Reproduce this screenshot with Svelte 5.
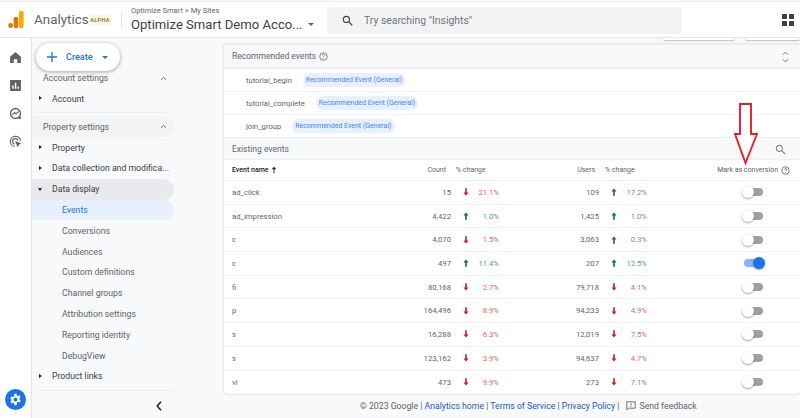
<script>
  const recommended = ['tutorial_begin', 'tutorial_complete', 'join_group'];
  const subs = ['Events', 'Conversions', 'Audiences', 'Custom definitions', 'Channel groups', 'Attribution settings', 'Reporting identity', 'DebugView'];
  const rows = [
    ['ad_click', '15', 'down', '21.1%', '109', 'up', '17.2%', false],
    ['ad_impression', '4,422', 'up', '1.0%', '1,425', 'up', '1.0%', false],
    ['c', '4,070', 'down', '1.5%', '3,063', 'up', '0.3%', false],
    ['c', '497', 'up', '11.4%', '207', 'up', '12.5%', true],
    ['fi', '80,168', 'down', '2.7%', '79,718', 'down', '4.1%', false],
    ['p', '164,496', 'down', '8.9%', '94,233', 'down', '4.9%', false],
    ['s', '16,288', 'down', '6.3%', '12,019', 'down', '7.5%', false],
    ['s', '123,162', 'down', '3.9%', '94,637', 'down', '4.7%', false],
    ['vi', '473', 'down', '9.9%', '273', 'down', '7.1%', false]
  ];
</script>

{#snippet help()}
  <svg class="help" viewBox="0 0 10 10" aria-hidden="true"><circle cx="5" cy="5" r="4.2" fill="none" stroke="#5f6368" stroke-width=".9"/><path d="M3.7 3.9c.1-.8.7-1.2 1.4-1.2s1.3.5 1.3 1.1c0 1-1.3 1-1.3 2" fill="none" stroke="#5f6368" stroke-width=".9"/><circle cx="5.1" cy="7.3" r=".55" fill="#5f6368"/></svg>
{/snippet}

{#snippet trend(dir)}
  <svg class="trend" viewBox="0 0 8 10" aria-hidden="true">
    {#if dir === 'up'}
      <path d="M4 .4 7.4 4.4H5.1V10H2.9V4.4H.6z" fill="#137333"/>
    {:else}
      <path d="M4 9.6 7.4 5.6H5.1V0H2.9V5.6H.6z" fill="#c5221f"/>
    {/if}
  </svg>
{/snippet}

{#snippet chevUp()}
  <svg class="chev" viewBox="0 0 10 6" aria-hidden="true"><path d="M1.2 5 5 1.4 8.8 5" fill="none" stroke="#5f6368" stroke-width="1.3"/></svg>
{/snippet}

<div class="page">
  <header class="top">
    <svg class="logo" viewBox="0 0 16 17" aria-hidden="true">
      <rect x="11" y="0" width="4.6" height="17" rx="1.6" fill="#f9ab00"/>
      <rect x="5.6" y="6" width="4.6" height="11" rx="1.6" fill="#e37400"/>
      <circle cx="2.6" cy="14.5" r="2.4" fill="#e37400"/>
    </svg>
    <span class="brand">Analytics</span>
    <span class="alpha">ALPHA</span>
    <span class="vr"></span>
    <div class="account">
      <div class="crumb">Optimize Smart <span class="gt">&gt;</span> My Sites</div>
      <div class="title">Optimize Smart Demo Acco... <i class="caret"></i></div>
    </div>
    <div class="search">
      <svg viewBox="0 0 14 14" aria-hidden="true"><circle cx="5.6" cy="5.6" r="3.9" fill="none" stroke="#3c4043" stroke-width="1.4"/><path d="M8.5 8.5 13 13" stroke="#3c4043" stroke-width="1.5"/></svg>
      <span>Try searching "Insights"</span>
    </div>
    <div class="apps"><i></i><i></i><i></i><i></i></div>
  </header>

  <div class="body">
    <nav class="rail">
      <svg viewBox="0 0 12 12" aria-hidden="true"><path d="M6 1 1 5.2V11h3.4V7.6h3.2V11H11V5.2z" fill="#5f6368"/></svg>
      <svg viewBox="0 0 12 12" aria-hidden="true"><path fill-rule="evenodd" d="M1 1h10v10H1zm2 5v3h1.3V6zm2.4-2.6V9h1.3V3.4zM7.9 7v2h1.3V7z" fill="#5f6368"/></svg>
      <svg viewBox="0 0 12 12" aria-hidden="true"><circle cx="6" cy="6" r="4.6" fill="none" stroke="#5f6368" stroke-width="1.2"/><path d="M3 7.2 5 5.2l1.4 1.3L9 4" fill="none" stroke="#5f6368" stroke-width="1.1"/><circle cx="9.8" cy="10" r="1.3" fill="#5f6368"/></svg>
      <svg viewBox="0 0 12 12" aria-hidden="true"><path d="M10.6 5.3A4.7 4.7 0 1 0 5.3 10.6M8.4 5.3A2.6 2.6 0 1 0 5.3 8.4" fill="none" stroke="#5f6368" stroke-width="1.1"/><path d="M5.6 5.6 11.4 7.8 9.2 8.9 8 11.2z" fill="#5f6368"/></svg>
      <span class="gear">
        <svg viewBox="0 0 12 12" aria-hidden="true"><path fill-rule="evenodd" d="M5 .8h2l.3 1.5 1 .5 1.4-.6 1 1.7-1.1 1 .1 1.1 1.1 1-1 1.7-1.4-.6-1 .5L7 11.2H5l-.3-1.6-1-.5-1.4.6-1-1.7 1.1-1-.1-1.1-1.1-1 1-1.7 1.4.6 1-.5zM6 4.2a1.8 1.8 0 1 0 0 3.6 1.8 1.8 0 0 0 0-3.6z" fill="#fff"/></svg>
      </span>
    </nav>

    <aside class="side">
      <button class="create">
        <svg viewBox="0 0 12 12" aria-hidden="true"><path d="M5.2 0h1.6v5.2H12v1.6H6.8V12H5.2V6.8H0V5.2h5.2z" fill="#1a73e8"/></svg>
        <span>Create</span>
        <i></i>
      </button>
      <div class="item head">Account settings {@render chevUp()}</div>
      <div class="item top-item"><i class="tri"></i>Account</div>
      <hr />
      <div class="item head shaded">Property settings {@render chevUp()}</div>
      <div class="item top-item"><i class="tri"></i>Property</div>
      <div class="item top-item"><i class="tri"></i>Data collection and modifica...</div>
      <div class="item top-item open"><i class="tri down"></i>Data display</div>
      {#each subs as s, i}
        <div class="item sub" class:active={i === 0}>{s}</div>
      {/each}
      <div class="item top-item"><i class="tri"></i>Product links</div>
      <hr class="low" />
      <svg class="collapse" viewBox="0 0 6 10" aria-hidden="true"><path d="M5 .8 1.2 5 5 9.2" fill="none" stroke="#202124" stroke-width="1.5"/></svg>
    </aside>

    <main class="main">
      <div class="stubs"><i></i><i></i></div>
      <section class="card">
        <div class="band rec">
          <span>Recommended events</span>{@render help()}
          <svg class="unfold" viewBox="0 0 8 14" aria-hidden="true"><path d="M1 4.4 4 1.4l3 3M1 9.6l3 3 3-3" fill="none" stroke="#5f6368" stroke-width="1"/></svg>
        </div>
        {#each recommended as r}
          <div class="rec-row"><span>{r}</span><b>Recommended Event (General)</b></div>
        {/each}
        <div class="band exist">
          <span>Existing events</span>
          <svg class="find" viewBox="0 0 14 14" aria-hidden="true"><circle cx="5.6" cy="5.6" r="4" fill="none" stroke="#5f6368" stroke-width="1.2"/><path d="M8.6 8.6 13 13" stroke="#5f6368" stroke-width="1.3"/></svg>
        </div>
        <div class="grid thead">
          <span class="ename">Event name <svg viewBox="0 0 8 10" aria-hidden="true"><path d="M4 .8 7 4H4.6v5.2H3.4V4H1z" fill="#202124"/></svg></span>
          <span class="r">Count</span>
          <span class="chg">% change</span>
          <span class="r">Users</span>
          <span class="chg">% change</span>
          <span class="mark">Mark as conversion {@render help()}</span>
        </div>
        {#each rows as row}
          <div class="grid trow">
            <span class="ename">{row[0]}</span>
            <span class="r">{row[1]}</span>
            <span class="delta {row[2]}">{@render trend(row[2])}<em>{row[3]}</em></span>
            <span class="r">{row[4]}</span>
            <span class="delta {row[5]}">{@render trend(row[5])}<em>{row[6]}</em></span>
            <span class="toggle" class:on={row[7]}><i></i></span>
          </div>
        {/each}
      </section>
      <footer class="foot">
        <span>© 2023 Google | <a href="#a">Analytics home</a> | <a href="#a">Terms of Service</a> | <a href="#a">Privacy Policy</a> |</span>
        <svg viewBox="0 0 10 10" aria-hidden="true"><path d="M.8.8h8.4v6.4H2.6L.8 9z" fill="none" stroke="#5f6368" stroke-width=".9"/><path d="M5 2.2v2.4M5 5.3v.8" stroke="#5f6368" stroke-width=".9"/></svg>
        <span class="fb">Send feedback</span>
      </footer>
    </main>
  </div>

  <svg class="redarrow" viewBox="0 0 24 62" aria-hidden="true"><path d="M6 1h11v30h6L11.5 60 1 31h5z" fill="#fff" stroke="#ee1c25" stroke-width="1.9"/></svg>
</div>

<style>
  :global(body) { margin: 0; background: #fff; }
  .page { position: relative; width: 800px; height: 418px; overflow: hidden; font-family: Roboto, "Liberation Sans", sans-serif; color: #3c4043; background: #f8f9fb; }
  i { display: block; font-style: normal; }

  .top { height: 37px; box-sizing: border-box; margin-top: 1px; border-top: 1px solid #eceef0; display: flex; align-items: center; background: #fff; border-bottom: 1px solid #e3e5e8; padding-left: 8px; }
  .logo { width: 16px; height: 17px; flex: none; }
  .brand { margin-left: 10px; font-size: 13.4px; color: #5f6368; width: 55px; }
  .alpha { width: 22px; height: 10px; background: #fef7e0; color: #80651f; font-size: 5.5px; font-weight: 500; letter-spacing: .4px; display: flex; align-items: center; justify-content: center; border-radius: 2px; }
  .vr { width: 1px; height: 18px; background: #e3e5e8; margin: 0 9.5px; }
  .account { width: 195.5px; flex: none; }
  .crumb { font-size: 7.5px; color: #5f6368; line-height: 10px; }
  .gt { font-size: 8px; }
  .title { font-size: 13.1px; line-height: 17px; color: #3c4043; display: flex; align-items: center; white-space: nowrap; }
  .caret { margin-left: 5px; border: 3px solid transparent; border-top: 3px solid #5f6368; border-bottom: 0; }
  .search { width: 355px; height: 27px; margin-top: 1px; background: #f1f3f4; border-radius: 4px; display: flex; align-items: center; gap: 11px; padding-left: 15.5px; box-sizing: border-box; font-size: 10.4px; color: #70757a; }
  .search svg { width: 11px; height: 11px; }
  .apps { margin-left: 100px; display: grid; grid-template-columns: 5px 5px; gap: 2px; margin-top: 1px; }
  .apps i { width: 5px; height: 5px; background: #3c4043; border-radius: .6px; }

  .body { display: flex; height: 380px; }
  .rail { width: 32px; flex: none; box-sizing: border-box; background: #fff; border-right: 1px solid #e3e5e8; display: flex; flex-direction: column; align-items: center; padding: 12.5px 1px 0 0; gap: 15px; }
  .rail > svg { width: 13px; height: 13px; }
  .gear { margin-top: auto; margin-bottom: 8px; width: 21px; height: 21px; border-radius: 50%; background: #1a73e8; display: flex; align-items: center; justify-content: center; }
  .gear svg { width: 13px; height: 13px; }

  .side { position: relative; width: 191px; flex: none; background: #f8f9fb; padding-top: 29.6px; box-sizing: border-box; font-size: 8.7px; }
  .create { position: absolute; left: 4px; top: 5px; width: 84px; height: 28px; border: 0; border-radius: 14px; background: #fff; box-shadow: 0 1px 3px 1px rgba(60,64,67,.3); display: flex; align-items: center; padding: 0 0 0 11px; font: 500 9px Roboto, sans-serif; color: #1a73e8; }
  .create svg { width: 10px; height: 10px; }
  .create span { margin-left: 9px; }
  .create i { margin-left: 10px; border: 3px solid transparent; border-top: 3.5px solid #1a73e8; border-bottom: 0; }
  .item { height: 20.8px; display: flex; align-items: center; white-space: nowrap; position: relative; box-sizing: border-box; color: #3c4043; width: 142px; border-radius: 0 11px 11px 0; }
  .head { padding-left: 11px; color: #5f6368; }
  .chev { position: absolute; right: 7px; top: 8px; width: 7px; height: 5px; }
  .shaded { background: #f1f3f4; }
  .top-item { padding-left: 20px; }
  .open { background: #e8eaed; }
  .sub { padding-left: 30px; color: #5f6368; }
  .active { background: #e8f0fe; color: #1a73e8; }
  .tri { position: absolute; left: 7px; top: 8px; border: 2.4px solid transparent; border-left: 3px solid #202124; border-right: 0; }
  .tri.down { left: 6px; top: 9px; border: 2.6px solid transparent; border-top: 3px solid #202124; border-bottom: 0; }
  hr { border: 0; height: 1px; background: #e8eaed; margin: 2.4px 0 3.8px 7px; width: 128px; }
  hr.low { width: 134px; margin-top: 3px; }
  .collapse { position: absolute; left: 124px; top: 363px; width: 6px; height: 10px; }

  .main { flex: 1; min-width: 0; display: flex; flex-direction: column; position: relative; }
  .stubs { height: 6px; position: relative; display: flex; padding-left: 440px; gap: 10px; }
  .stubs i { height: 2px; background: #fff; box-shadow: 0 1px 1px rgba(60,64,67,.3); border-radius: 0 0 3px 3px; width: 78px; }
  .stubs i + i { width: 60px; }
  .card { background: #fff; border-radius: 0 0 4px 4px; box-shadow: 0 0 2px rgba(60,64,67,.3); margin-left: 1px; }
  .band { background: #f8f9fb; display: flex; align-items: center; padding-left: 8px; font-size: 8.5px; color: #5f6368; position: relative; }
  .rec { height: 24px; gap: 3px; border-top: 1px solid #eceef0; border-bottom: 1px solid #eceef0; box-sizing: border-box; }
  .exist { height: 23px; border-top: 1px solid #eceef0; border-bottom: 1px solid #eceef0; box-sizing: border-box; }
  .help { width: 9px; height: 9px; flex: none; }
  .unfold { position: absolute; right: 11px; top: 6px; width: 7px; height: 12px; }
  .find { position: absolute; right: 14px; top: 6px; width: 11px; height: 11px; }
  .rec-row { height: 23px; box-sizing: border-box; padding-left: 22px; display: flex; align-items: center; gap: 11px; color: #5f6368; font-size: 7.6px; border-top: 1px solid #f1f3f4; }
  .rec-row b { font-weight: 400; font-size: 7px; color: #4285f4; background: #e8f0fe; border-radius: 7px; padding: 0 3px; line-height: 14px; }

  .grid { display: grid; align-items: center; padding-left: 8px; }
  .thead { height: 21px; grid-template-columns: 169px 45px 45px 104px 46px 1fr; color: #5f6368; font-size: 7px; border-bottom: 1px solid #f1f3f4; box-sizing: border-box; }
  .thead .ename { color: #202124; font-weight: 500; display: flex; align-items: center; gap: 2px; }
  .thead .ename svg { width: 6px; height: 8px; }
  .thead .chg { padding-left: 10px; }
  .mark { display: flex; align-items: center; gap: 3px; justify-content: flex-end; padding-right: 10px; }
  .trow { height: 23.7px; grid-template-columns: 169px 50px 48px 100px 48px 1fr; box-sizing: border-box; color: #5f6368; border-bottom: 1px solid #f1f3f4; font-size: 7.7px; }
  .trow:last-child { border-bottom: 0; }
  .r { text-align: right; }
  .delta { display: flex; align-items: center; justify-content: space-between; padding-left: 12px; }
  .delta em { font-style: normal; }
  .delta.up em { color: #5a9f75; }
  .delta.down em { color: #d2686a; }
  .trend { width: 6px; height: 8px; }
  .toggle { justify-self: start; margin-left: 97px; width: 19px; height: 8px; background: #9aa0a6; border-radius: 4px; position: relative; }
  .toggle i { position: absolute; left: -2px; top: -2px; width: 12px; height: 12px; border-radius: 50%; background: #fff; box-shadow: 0 1px 2px rgba(60,64,67,.5); }
  .toggle.on { background: #8ab4f8; }
  .toggle.on i { left: auto; right: -2px; background: #1a73e8; }

  .foot { flex: 1; display: flex; align-items: center; gap: 3px; padding-left: 137px; font-size: 8.7px; color: #5f6368; white-space: nowrap; }
  .foot a { color: #1a56c8; text-decoration: none; }
  .foot svg { width: 10px; height: 10px; margin-left: 3px; }
  .fb { margin-left: 1px; }

  .redarrow { position: absolute; left: 733.5px; top: 102.5px; width: 24px; height: 62px; }
</style>
